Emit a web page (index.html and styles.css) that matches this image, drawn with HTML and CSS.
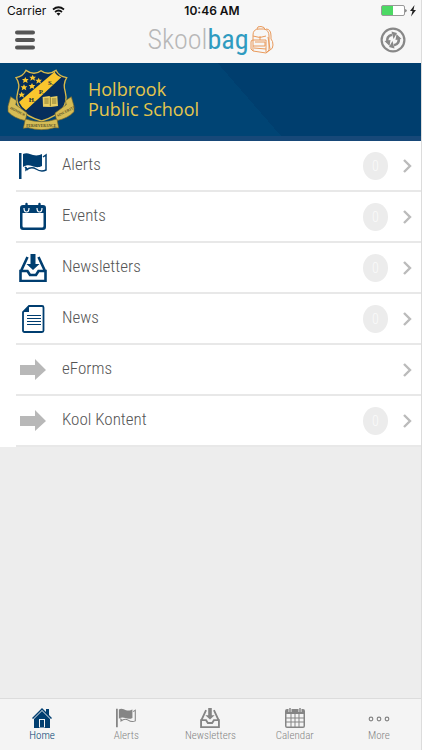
FILE: index.html
```html
<!DOCTYPE html>
<html lang="en">
<head>
<meta charset="utf-8">
<meta name="viewport" content="width=device-width, initial-scale=1">
<title>Skoolbag</title>
<link rel="stylesheet" href="styles.css">
</head>
<body>
<svg class="defs" aria-hidden="true">
  <symbol id="flag" viewBox="0 0 28 28">
    <path fill="currentColor" d="M0 1h2.500v26H0zM4 2c4-2 7 0 10 1 4 1 7 0 9-1v12c-4 2-7 1-10 0s-6-1-9 1z"/>
    <path fill="none" stroke="currentColor" stroke-width="1.500" d="M24 5l3-2v15c-4 2-7 1-10-1s-6-2-10 1v-3M6 15l3 3"/>
  </symbol>
  <symbol id="inbox" viewBox="0 0 28 28">
    <path fill="none" stroke="currentColor" stroke-width="2.600" d="M1.500 17v10h25V17h-7l-2.500 4h-6l-2.500-4zM2 17L8.500 3M26 17L19.500 3"/>
    <path fill="currentColor" d="M11.500 0h5v10h4L14 16l-6.500-6h4z"/>
  </symbol>
  <symbol id="arrow" viewBox="0 0 28 22">
    <path fill="currentColor" d="M1 6h15V0l11 11-11 10v-5H1z"/>
  </symbol>
  <symbol id="chevron" viewBox="0 0 9 14">
    <path fill="none" stroke="currentColor" stroke-width="2.400" d="M1 1l6 6-6 6"/>
  </symbol>
</svg>
<div class="app">
  <header class="top">
    <div class="status">
      <div class="carrier"><span>Carrier</span>
        <svg class="wifi" viewBox="0 0 13 10" aria-hidden="true"><path fill="none" stroke="#111" stroke-width="1.700" d="M1 3.500q5.500-4.500 11 0M3 6q3.500-3 7 0"/><path d="M4.500 7.500q2-1.500 4 0l-2 2.200z" fill="#111"/></svg>
      </div>
      <span class="time">10:46 AM</span>
      <div class="power">
        <svg class="battery" viewBox="0 0 36 12" aria-hidden="true"><rect x=".5" y=".5" width="23" height="10" rx="1.500" fill="#fff" stroke="#999"/><path fill="#4cd964" d="M1 1h11v9H1z"/><path fill="#222" d="M24.500 4q2 1.500 0 3.500zM33.500 0L29 6h2.500L30 11.500 35 5h-2.500z"/></svg>
      </div>
    </div>
    <div class="nav">
      <button class="icon-button menu" aria-label="Menu"><svg viewBox="0 0 20 20"><path stroke="#555" stroke-width="4" stroke-linecap="round" d="M2 2.500h16M2 10h16M2 17.500h16"/></svg></button>
      <div class="brand"><span class="brand-name">Skool<b>bag</b></span>
        <svg class="bag" viewBox="0 0 24 28" fill="none" stroke="#e99a5c" stroke-width="1"><path d="M3 25V9q0-6 6-6h5q5 1 5 7v14l-3 3zM7 3q0-3 4-2.500T15 3.500M16 3q5 0 5 7v3q2 2 2 6t-3 5l-4 3M3 10q7 3 13 0M3 14h13v12M5 16h10v4H3M1 16v7l2 2M1 16q0-2 2-2M10 10v4M18 11l2 12M4 22l12 1"/></svg>
      </div>
      <button class="icon-button refresh" aria-label="Refresh"><svg viewBox="0 0 26 26"><circle cx="13" cy="13" r="11.400" fill="none" stroke="#888" stroke-width="2.200"/><g id="turn"><path d="M7.500 15.500Q6 9 12 7.800" fill="none" stroke="#888" stroke-width="2.600"/><path fill="#888" d="M11.500 4.500l5.500 1.500-3.500 6zM4.500 14l6-1-1 6z"/></g><use href="#turn" transform="rotate(180 13 13)"/></svg></button>
    </div>
  </header>
  <section class="banner">
    <svg class="crest" viewBox="18 21 204 204" aria-label="Holbrook Public School crest">
      <path d="M48 50Q70 46 78 28 102 45 123 29 144 45 168 28 176 46 200 50 188 70 196 94C208 140 170 166 125 180 78 166 40 140 53 94Q62 70 48 50z" fill="#062e5c" stroke="#d9ba4b" stroke-width="4"/>
      <path d="M57 123L164 32Q168 43 184 49L78 148Q64 138 57 123z" fill="#fac62d"/>
      <g fill="#fac62d"><path id="star" d="M76 48l3 6 7 0-5 5 2 7-7-4-7 4 2-7-5-5 7 0z"/><use href="#star" x="22" y="-7"/><use href="#star" x="40" y="2"/><use href="#star" x="-4" y="22"/><use href="#star" x="20" y="18"/><use href="#star" x="-11" y="44"/></g>
      <path fill="#e9cd61" d="M128 108l20-3 4 3 20-3 2 30-22 3-23-1z"/><path stroke="#55531f" stroke-width="2" d="M151 109v27M133 114h13M133 120h13M133 126h13M156 114h13M156 120h13M156 126h13"/>
      <g class="crest-letters"><text x="86" y="122">H.</text><text x="116" y="99">P.</text><text x="144" y="72">S.</text></g>
      <g fill="#d5bc55" stroke="#75662c" stroke-width="2"><path id="ribbon" d="M24 136l8-29 18 12-3 12 34 25-5 23Q42 172 24 152z"/><use href="#ribbon" transform="matrix(-1 0 0 1 246 0)"/><path d="M76 174Q124 190 171 174l5 27-12-1q-40 12-80 0l-14 2z"/></g>
      <g class="motto"><text x="29" y="143" transform="rotate(27 29 143)">HONOUR</text><text x="79" y="197">PERSEVERANCE</text><text x="173" y="168" transform="rotate(-27 173 168)">SINCERITY</text></g>
    </svg>
    <h1 class="school"><span>Holbrook</span><span>Public School</span></h1>
  </section>
  <main class="content">
    <nav class="list">
      <a class="row" href="#alerts"><svg class="row-icon"><use href="#flag"/></svg><span class="label">Alerts</span><span class="badge">0</span><svg class="chevron"><use href="#chevron"/></svg></a>
      <a class="row" href="#events"><svg class="row-icon" viewBox="0 0 28 28"><path fill="currentColor" fill-rule="evenodd" d="M4 2h20q3 0 3 3v19q0 3-3 3H4q-3 0-3-3V5q0-3 3-3zM3.500 10v13q0 1.500 1.500 1.500h18q1.500 0 1.500-1.500V10z"/><path fill="none" stroke="#fff" stroke-width="1.200" d="M5 5q0 4 2.500 4T10 5M18 5q0 4 2.500 4T23 5"/><path stroke="currentColor" stroke-width="2.400" stroke-linecap="round" d="M7.500 1v5M20.500 1v5"/></svg><span class="label">Events</span><span class="badge">0</span><svg class="chevron"><use href="#chevron"/></svg></a>
      <a class="row" href="#newsletters"><svg class="row-icon"><use href="#inbox"/></svg><span class="label">Newsletters</span><span class="badge">0</span><svg class="chevron"><use href="#chevron"/></svg></a>
      <a class="row" href="#news"><svg class="row-icon" viewBox="0 0 28 28"><path fill="none" stroke="currentColor" stroke-width="1.800" d="M10 1h13q1.500 0 1.500 1.500v23q0 1.500-1.500 1.500H5.500Q4 27 4 25.500V7z"/><path fill="currentColor" d="M10 1v6H4z"/><path stroke="currentColor" stroke-width="1" d="M8 10.500h14M8 13.500h14M8 16.500h14M8 19.500h14"/></svg><span class="label">News</span><span class="badge">0</span><svg class="chevron"><use href="#chevron"/></svg></a>
      <a class="row link" href="#eforms"><svg class="row-icon"><use href="#arrow"/></svg><span class="label">eForms</span><svg class="chevron"><use href="#chevron"/></svg></a>
      <a class="row link" href="#kool-kontent"><svg class="row-icon"><use href="#arrow"/></svg><span class="label">Kool Kontent</span><span class="badge">0</span><svg class="chevron"><use href="#chevron"/></svg></a>
    </nav>
  </main>
  <nav class="tabs">
    <a class="tab active" href="#home"><svg viewBox="0 0 20 20"><path fill="currentColor" d="M10 0l4 4V1h3v6l3 3-1 1-9-9-9 9-1-1z"/><path fill="currentColor" fill-rule="evenodd" d="M10 3l8 8v9H2v-9zM7 19.500h6V11H7zM8 12h4v8H8z"/></svg><span>Home</span></a>
    <a class="tab" href="#alerts"><svg><use href="#flag"/></svg><span>Alerts</span></a>
    <a class="tab" href="#newsletters"><svg><use href="#inbox"/></svg><span>Newsletters</span></a>
    <a class="tab" href="#calendar"><svg viewBox="0 0 20 20"><path fill="currentColor" fill-rule="evenodd" d="M2 1h16q2 0 2 2v15q0 2-2 2H2q-2 0-2-2V3q0-2 2-2zM1.500 6v12q0 .5.500.5h16q.5 0 .5-.5V6z"/><path fill="none" stroke="currentColor" d="M1 10h18M1 14h18M6 6v13M10 6v13M14 6v13"/><path stroke="#f4f4f4" stroke-width="3" d="M5 0v4M15 0v4"/><path stroke="currentColor" stroke-width="1.500" d="M5 0v4M15 0v4"/></svg><span>Calendar</span></a>
    <a class="tab" href="#more"><svg viewBox="0 0 20 20" fill="none" stroke="currentColor" stroke-width="1.200"><circle cx="2" cy="11" r="1.800"/><circle cx="10" cy="11" r="1.800"/><circle cx="18" cy="11" r="1.800"/></svg><span>More</span></a>
  </nav>
</div>
</body>
</html>
```
FILE: styles.css
```css
* { box-sizing: border-box; }
body { margin: 0; background: #ededed; font-family: "Roboto Condensed", Roboto, sans-serif; font-weight: 300; }
.defs { display: none; }
svg { display: block; overflow: visible; }
a { color: inherit; text-decoration: none; }
.app { display: flex; flex-direction: column; min-height: 100vh; border-right: 1px solid #dcdcdc; }
.top { background: #f7f7f7; }
.status { display: grid; grid-template-columns: 1fr auto 1fr; align-items: center; height: 20px; padding: 2px 4px 0 7px; font: 400 12px/18px Inter, sans-serif; color: #111; }
.carrier { display: flex; align-items: center; gap: 6px; }
.wifi { width: 13px; height: 10px; }
.time { font-weight: 600; }
.power { display: flex; justify-content: flex-end; }
.battery { width: 36px; height: 12px; }
.nav { display: grid; grid-template-columns: 1fr auto 1fr; align-items: center; height: 43px; padding: 0 15px 4px; }
.icon-button { padding: 0; border: 0; background: none; }
.menu { justify-self: start; }
.menu svg { width: 20px; height: 20px; }
.refresh { justify-self: end; }
.refresh svg { width: 26px; height: 26px; }
.brand { display: flex; align-items: center; gap: 1px; }
.brand-name { font-size: 28px; line-height: 36px; color: #b8b8b8; }
.brand-name b { font-weight: 400; color: #2f9bc0; }
.bag { width: 24px; height: 28px; }
.banner { display: flex; align-items: flex-start; gap: 14px; height: 78px; padding: 5px 6px 0; background: linear-gradient(49deg, #004474 0 58%, #003e6e 58% 100%); border-bottom: 5px solid #174878; }
.crest { width: 68px; height: 68px; }
.crest-letters { font: 700 20px "Liberation Serif", serif; fill: #172d3e; }
.motto { font: 700 11px "Liberation Serif", serif; fill: #4f4d29; }
.school { display: grid; margin: 11px 0 0; font: 400 18px/20px "Open Sans", sans-serif; color: #e6c64c; }
.content { flex: 1; }
.list { padding-left: 16px; background: #fff; }
.row { display: flex; align-items: center; height: 51px; padding: 0 9px 0 3px; border-bottom: 2px solid #e8e8e8; color: #003e70; }
.row-icon { flex: none; width: 28px; height: 28px; }
.label { flex: 1; margin-left: 15px; padding-bottom: 3px; font-size: 17px; line-height: 24px; color: #555; }
.link { color: #b8b8b8; }
.badge { width: 25px; height: 28px; margin-right: 15px; border-radius: 50%; background: #ececec; color: #fafafa; font-size: 14px; line-height: 28px; text-align: center; }
.chevron { width: 9px; height: 14px; color: #bbb; }
.tabs { display: grid; grid-template-columns: repeat(5, 1fr); height: 52px; padding-top: 9px; background: #f4f4f4; border-top: 1px solid #dcdcdc; color: #858585; }
.tab { display: flex; flex-direction: column; align-items: center; font-size: 11px; line-height: 16px; }
.tab svg { width: 20px; height: 20px; }
.active { color: #003e70; }
```
